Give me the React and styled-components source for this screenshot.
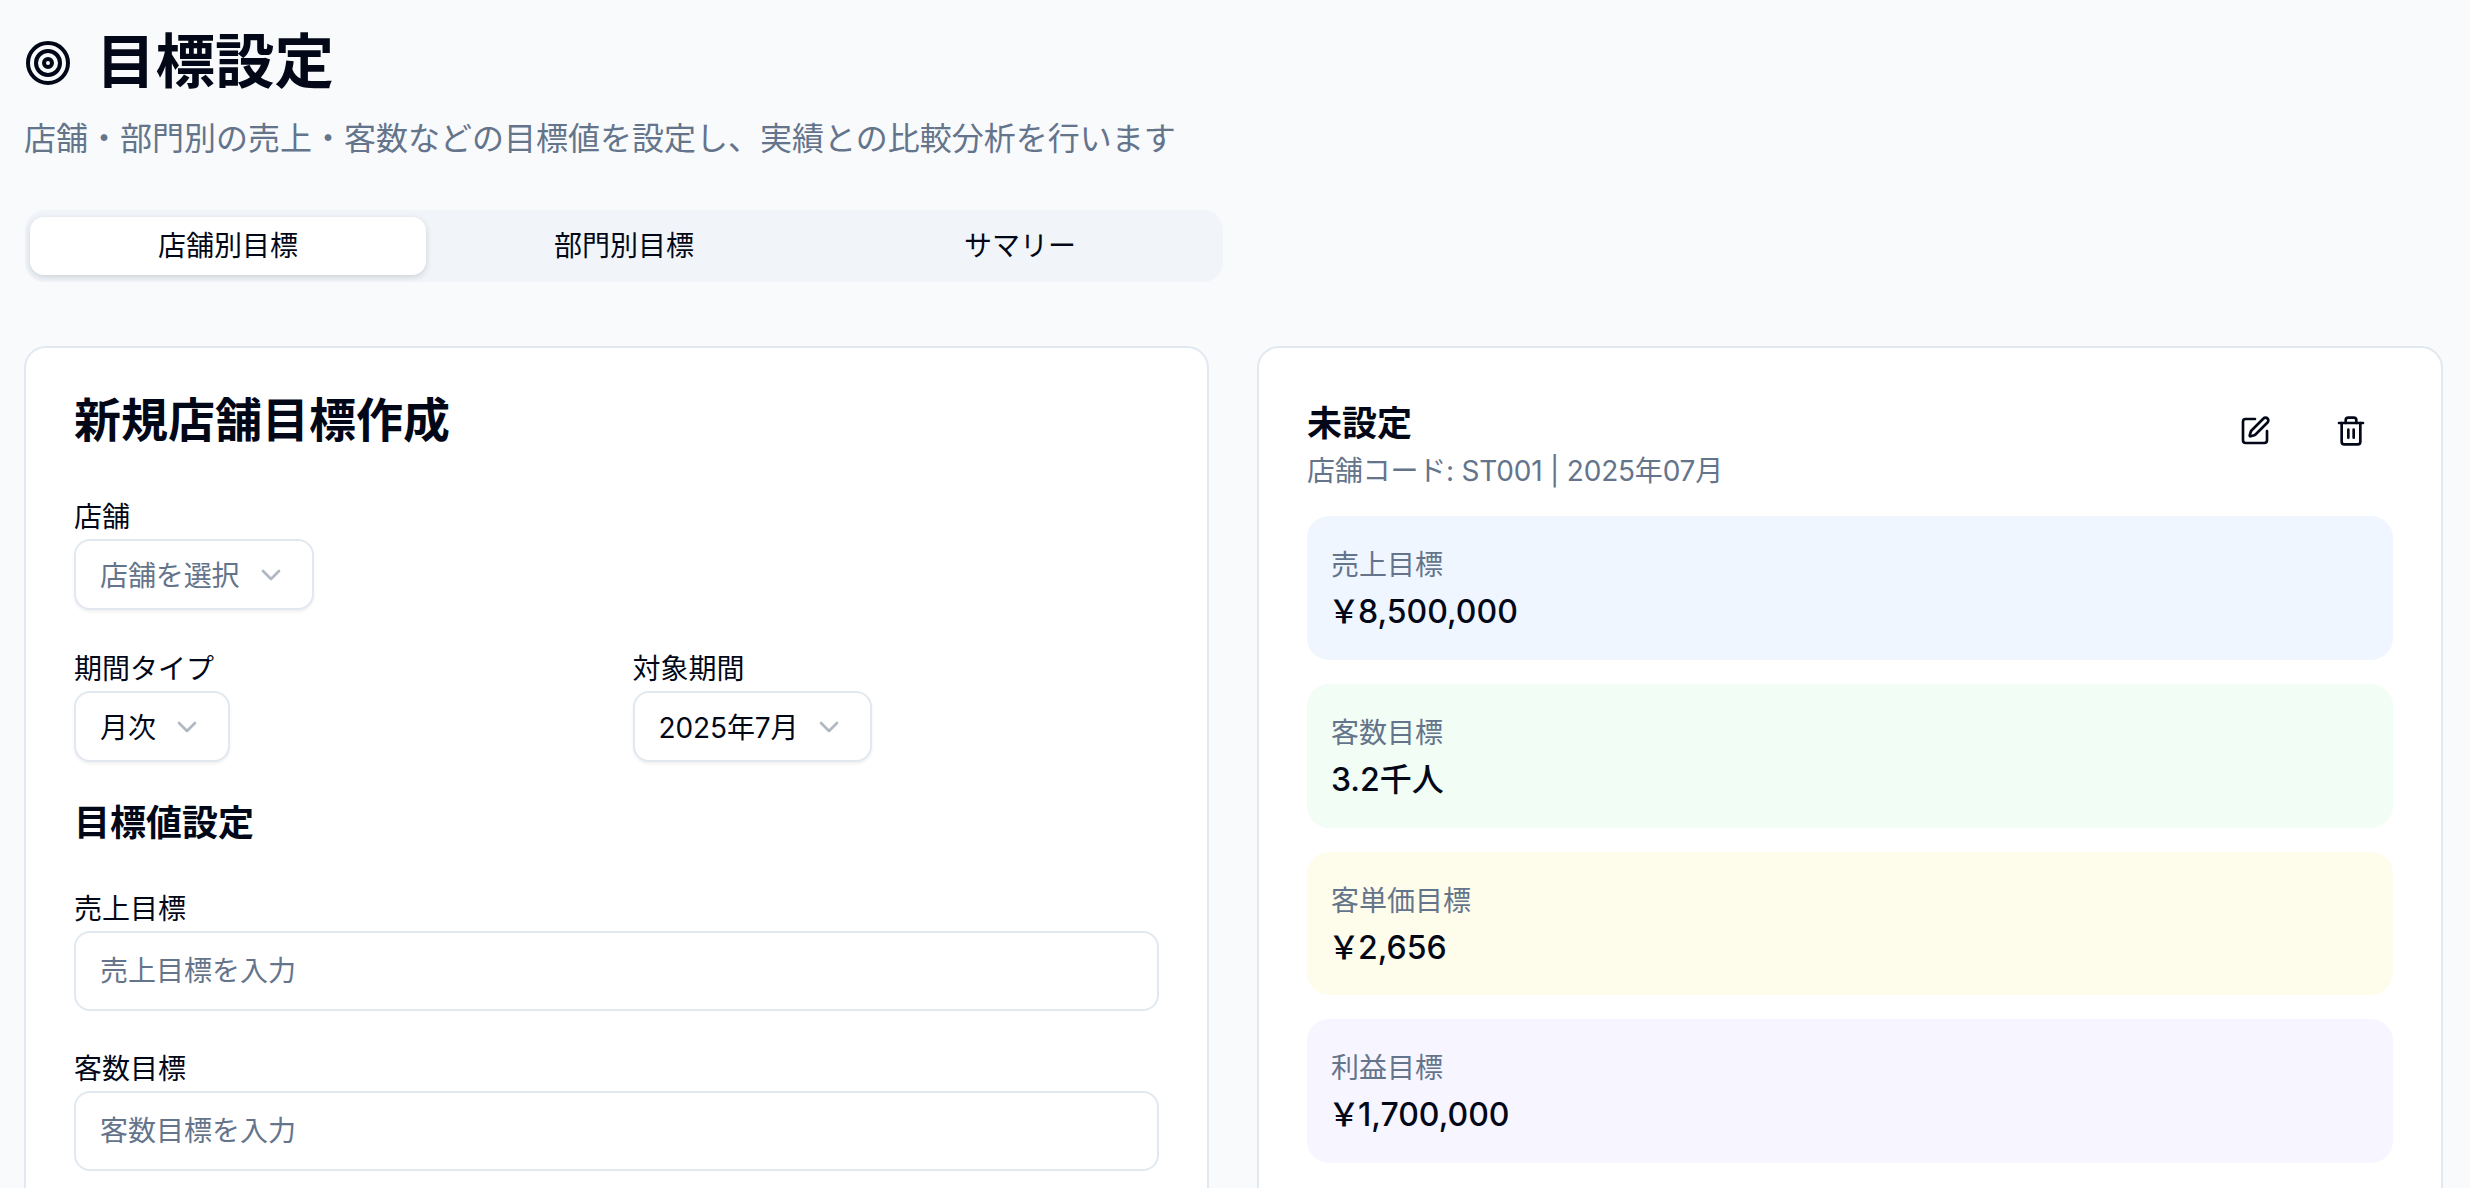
import React from "react";
import styled, { createGlobalStyle } from "styled-components";
import { Target, SquarePen, Trash2, ChevronDown } from "lucide-react";

const GlobalStyle = createGlobalStyle`
  html, body {
    margin: 0;
    height: 1188px;
    overflow: hidden;
    background: #f8fafc;
    color: #020817;
    font-family: Inter, "Noto Sans CJK JP", sans-serif;
  }
  * { box-sizing: border-box; }
`;

const Page = styled.div`
  padding: 24px 27px 0 24px;
`;

const TitleRow = styled.div`
  display: flex;
  align-items: center;
  gap: 24px;
`;

const Title = styled.h1`
  margin: 0;
  padding-bottom: 3px;
  font-size: 59.5px;
  line-height: 75px;
  font-weight: 700;
`;

const Subtitle = styled.p`
  margin: 15px 0 49px;
  font-size: 32px;
  line-height: 44px;
  color: #64748b;
`;

const TabList = styled.div`
  display: grid;
  grid-template-columns: repeat(3, 396px);
  width: 1198px;
  height: 72px;
  margin: 0 0 64px 1px;
  padding: 7px 5px;
  background: #f1f5f9;
  border-radius: 20px;
`;

const Tab = styled.button`
  border: none;
  border-radius: 14px;
  padding: 0 0 5px;
  font: inherit;
  font-size: 28px;
  color: #020817;
  background: ${(p) => (p.$active ? "#ffffff" : "transparent")};
  box-shadow: ${(p) => (p.$active ? "0 2px 6px rgba(15, 23, 42, 0.16)" : "none")};
`;

const Columns = styled.div`
  display: grid;
  grid-template-columns: 1185px 1186px;
  gap: 48px;
`;

const Card = styled.section`
  background: #ffffff;
  border: 2px solid #e2e8f0;
  border-radius: 22px;
  height: 900px;
  padding: ${(p) => p.$top}px 48px 0;
`;

const CardTitle = styled.h2`
  margin: 0 0 52px;
  font-size: 47px;
  line-height: 56px;
  font-weight: 700;
`;

const Field = styled.div`
  margin-bottom: ${(p) => p.$after}px;
`;

const Label = styled.label`
  display: block;
  font-size: 28px;
  line-height: 34px;
  margin-bottom: 5px;
`;

const Select = styled.button`
  display: inline-flex;
  align-items: center;
  gap: 15px;
  height: 71px;
  padding: 0 25px 0 24px;
  background: #ffffff;
  border: 2px solid #e2e8f0;
  border-radius: 16px;
  box-shadow: 0 2px 3px rgba(15, 23, 42, 0.06);
  font: inherit;
  font-size: 28px;
  letter-spacing: -0.1px;
  color: ${(p) => (p.$placeholder ? "#64748b" : "#020817")};

  span {
    position: relative;
    top: -1px;
  }

  svg {
    color: #64748b;
    opacity: 0.5;
  }
`;

const TwoCol = styled.div`
  display: grid;
  grid-template-columns: 1fr 1fr;
  column-gap: 32px;
`;

const SectionTitle = styled.h3`
  margin: 0 0 47px;
  font-size: 36px;
  line-height: 44px;
  font-weight: 700;
`;

const Input = styled.input`
  display: block;
  width: 100%;
  height: 80px;
  padding: 0 24px;
  background: #ffffff;
  border: 2px solid #e2e8f0;
  border-radius: 16px;
  font: inherit;
  font-size: 28px;

  &::placeholder {
    color: #64748b;
    opacity: 1;
  }
`;

const CardHead = styled.div`
  display: flex;
  justify-content: space-between;
  align-items: flex-start;
  margin-bottom: 25px;
`;

const HeadText = styled.div`
  padding-top: 5px;
`;

const StoreName = styled.h2`
  margin: 0 0 6px;
  font-size: 35px;
  line-height: 44px;
  font-weight: 700;
`;

const StoreCode = styled.p`
  margin: 0;
  font-size: 28px;
  line-height: 40px;
  letter-spacing: -0.2px;
  color: #64748b;
`;

const Actions = styled.div`
  display: flex;
  gap: 16px;
  margin-right: 2px;
`;

const IconButton = styled.button`
  display: flex;
  align-items: center;
  justify-content: center;
  width: 80px;
  height: 70px;
  border: none;
  background: transparent;
  color: #020817;
`;

const Stats = styled.div`
  display: flex;
  flex-direction: column;
  gap: 24px;
`;

const Stat = styled.div`
  height: 143.8px;
  padding: 29px 24px 0;
  border-radius: 22px;
  background: ${(p) => p.$bg};
`;

const StatLabel = styled.div`
  font-size: 28px;
  line-height: 40px;
  color: #64748b;
`;

const StatValue = styled.div`
  margin-top: 5px;
  font-size: 32px;
  line-height: 44px;
  font-weight: 500;
`;

const Yen = styled.span`
  margin: 0 -2px 0 -3px;
`;

const stats = [
  { label: "売上目標", value: "8,500,000", yen: true, bg: "#eff6ff" },
  { label: "客数目標", value: "3.2千人", bg: "#f2fdf6" },
  { label: "客単価目標", value: "2,656", yen: true, bg: "#fefdec" },
  { label: "利益目標", value: "1,700,000", yen: true, bg: "#f7f5ff" },
];

export default function App() {
  return (
    <Page>
      <GlobalStyle />
      <TitleRow>
        <Target size={48} strokeWidth={2} />
        <Title>目標設定</Title>
      </TitleRow>
      <Subtitle>店舗・部門別の売上・客数などの目標値を設定し、実績との比較分析を行います</Subtitle>

      <TabList>
        <Tab $active>店舗別目標</Tab>
        <Tab>部門別目標</Tab>
        <Tab>サマリー</Tab>
      </TabList>

      <Columns>
        <Card $top={44}>
          <CardTitle>新規店舗目標作成</CardTitle>
          <Field $after={42}>
            <Label>店舗</Label>
            <Select $placeholder>
              <span>店舗を選択</span>
              <ChevronDown size={32} />
            </Select>
          </Field>
          <TwoCol>
            <Field $after={39}>
              <Label>期間タイプ</Label>
              <Select>
                <span>月次</span>
                <ChevronDown size={32} />
              </Select>
            </Field>
            <Field $after={39}>
              <Label>対象期間</Label>
              <Select>
                <span>2025年7月</span>
                <ChevronDown size={32} />
              </Select>
            </Field>
          </TwoCol>
          <SectionTitle>目標値設定</SectionTitle>
          <Field $after={41}>
            <Label>売上目標</Label>
            <Input placeholder="売上目標を入力" />
          </Field>
          <Field $after={41}>
            <Label>客数目標</Label>
            <Input placeholder="客数目標を入力" />
          </Field>
        </Card>

        <Card $top={48}>
          <CardHead>
            <HeadText>
              <StoreName>未設定</StoreName>
              <StoreCode>店舗コード: ST001 | 2025年07月</StoreCode>
            </HeadText>
            <Actions>
              <IconButton>
                <SquarePen size={32} />
              </IconButton>
              <IconButton>
                <Trash2 size={32} />
              </IconButton>
            </Actions>
          </CardHead>
          <Stats>
            {stats.map((s) => (
              <Stat key={s.label} $bg={s.bg}>
                <StatLabel>{s.label}</StatLabel>
                <StatValue>
                  {s.yen && <Yen>￥</Yen>}
                  {s.value}
                </StatValue>
              </Stat>
            ))}
          </Stats>
        </Card>
      </Columns>
    </Page>
  );
}
